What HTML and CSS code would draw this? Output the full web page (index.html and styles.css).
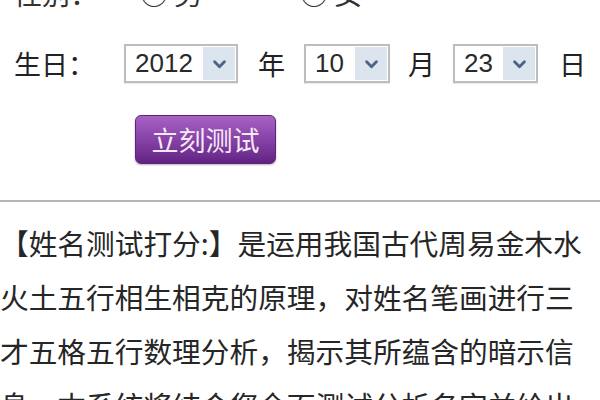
FILE: index.html
```html
<!DOCTYPE html>
<html lang="zh-CN">
<head>
<meta charset="utf-8">
<title>姓名测试打分</title>
<link rel="stylesheet" href="styles.css">
</head>
<body>
<div class="form">
  <div class="row row-sex">
    <span class="label">性别：</span>
    <span class="opt">○ 男</span>
    <span class="opt">○ 女</span>
  </div>
  <div class="row row-birth">
    <span class="label">生日：</span>
    <div class="sel sel-year">
      <span class="val">2012</span>
      <span class="arrow"><svg viewBox="0 0 12 8" width="13" height="9"><path d="M1.5 1.5 L6 6 L10.5 1.5" fill="none" stroke="#4d6384" stroke-width="2.6" stroke-linecap="round" stroke-linejoin="round"/></svg></span>
    </div>
    <span class="unit unit-year">年</span>
    <div class="sel sel-month">
      <span class="val">10</span>
      <span class="arrow"><svg viewBox="0 0 12 8" width="13" height="9"><path d="M1.5 1.5 L6 6 L10.5 1.5" fill="none" stroke="#4d6384" stroke-width="2.6" stroke-linecap="round" stroke-linejoin="round"/></svg></span>
    </div>
    <span class="unit unit-month">月</span>
    <div class="sel sel-day">
      <span class="val">23</span>
      <span class="arrow"><svg viewBox="0 0 12 8" width="13" height="9"><path d="M1.5 1.5 L6 6 L10.5 1.5" fill="none" stroke="#4d6384" stroke-width="2.6" stroke-linecap="round" stroke-linejoin="round"/></svg></span>
    </div>
    <span class="unit unit-day">日</span>
  </div>
  <div class="row row-btn">
    <button class="btn" type="button">立刻测试</button>
  </div>
</div>
<hr class="sep">
<p class="intro">【姓名测试打分:】是运用我国古代周易金木水火土五行相生相克的原理，对姓名笔画进行三才五格五行数理分析，揭示其所蕴含的暗示信息。本系统将结合您全面测试分析名字并给出名字</p>
</body>
</html>
```

FILE: styles.css
```css
html, body {
  margin: 0;
  padding: 0;
  background: #ffffff;
  overflow: hidden;
}

body {
  width: 600px;
  height: 400px;
  font-family: "Noto Sans CJK SC", "Liberation Sans", sans-serif;
  color: #222222;
}

.form {
  padding-left: 14px;
}

.row {
  display: flex;
  align-items: center;
}

.row-sex {
  margin-top: -21px;
  height: 28px;
  font-size: 28px;
  line-height: 28px;
  color: #333333;
}

.row-sex .label {
  width: 126px;
}

.row-sex .opt {
  width: 160px;
}

.row-birth {
  margin-top: 37px;
  height: 39px;
  font-size: 27px;
  color: #222222;
}

.row-birth .label {
  width: 110px;
}

.sel {
  box-sizing: border-box;
  height: 39px;
  border: 2px solid #bdbdbd;
  background: #ffffff;
  display: flex;
  align-items: stretch;
  justify-content: space-between;
  padding: 1px 1px 1px 9px;
  box-shadow: 0 1px 1px rgba(0, 0, 0, 0.08);
}

.sel-year { width: 114px; }
.sel-month { width: 86px; }
.sel-day { width: 85px; }

.val {
  font-family: "Liberation Sans", Arial, sans-serif;
  font-size: 26px;
  line-height: 33px;
  color: #2a2a2a;
}

.arrow {
  width: 32px;
  background: #dce4ee;
  display: flex;
  align-items: center;
  justify-content: center;
  padding-top: 2px;
}

.unit {
  font-size: 27px;
  line-height: 39px;
  padding: 0 19px 0 20px;
}

.unit-month {
  padding: 0 18px 0 18px;
}

.unit-day {
  padding: 0 0 0 21px;
}

.row-btn {
  margin-top: 32px;
  padding-left: 121px;
}

.btn {
  box-sizing: border-box;
  width: 141px;
  height: 49px;
  border: 1px solid #5a2678;
  border-radius: 6px;
  background: linear-gradient(to bottom, #a663c4 0%, #8a45aa 45%, #6e2d8f 85%, #5e2380 100%);
  color: #f6e9f6;
  font-family: "Noto Sans CJK SC", sans-serif;
  font-size: 27px;
  line-height: 45px;
  padding: 0;
  letter-spacing: 0;
  box-shadow: 0 1px 2px rgba(60, 20, 80, 0.35);
}

.sep {
  margin: 36px 0 0 0;
  height: 2px;
  border: 0;
  background: #b5b5b5;
}

.intro {
  margin: 14px 0 0 0;
  width: 596px;
  font-size: 28.7px;
  line-height: 54px;
  color: #262626;
}
```
